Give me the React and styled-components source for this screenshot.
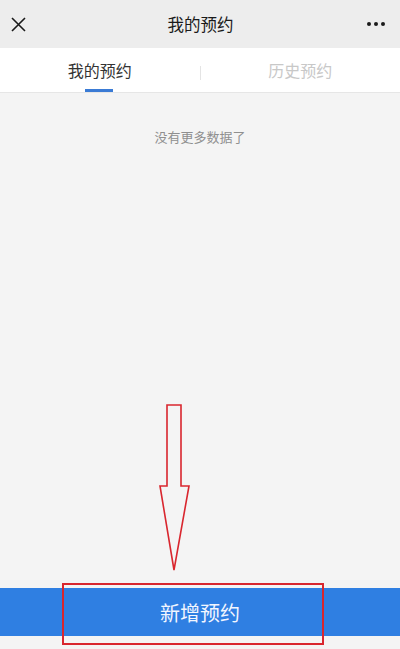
import React from 'react'
import styled, {createGlobalStyle} from 'styled-components'

const GlobalStyle = createGlobalStyle`
  html, body {
    margin: 0;
    padding: 0;
    background: #f4f4f4;
  }
  body {
    font-family: "Noto Sans CJK SC", "Liberation Sans", sans-serif;
  }
`

const Page = styled.div`
  width: 400px;
  height: 649px;
  display: flex;
  flex-direction: column;
  background: #f4f4f4;
  overflow: hidden;
`

const NavBar = styled.div`
  height: 48px;
  display: flex;
  align-items: center;
  justify-content: space-between;
  padding: 0 14px 0 11px;
  background: #ededed;
  box-sizing: border-box;
`

const NavTitle = styled.div`
  font-size: 16.5px;
  color: #1a1a1a;
  margin-left: 4px;
`

const IconBtn = styled.div`
  width: 22px;
  display: flex;
  align-items: center;
  justify-content: ${p => p.right ? 'flex-end' : 'flex-start'};
`

const Tabs = styled.div`
  height: 44px;
  display: flex;
  align-items: stretch;
  background: #fff;
  border-bottom: 1px solid #e6e6e6;
`

const Tab = styled.div`
  flex: 1;
  display: flex;
  align-items: center;
  justify-content: center;
  font-size: 16px;
  color: ${p => p.active ? '#333' : '#c8c8c8'};
  position: relative;
  &::after {
    content: '';
    display: ${p => p.active ? 'block' : 'none'};
    position: absolute;
    bottom: 0;
    left: 50%;
    width: 28px;
    height: 3px;
    margin-left: -15px;
    background: #3a7bd5;
  }
`

const Divider = styled.div`
  width: 1px;
  height: 14px;
  align-self: center;
  margin-top: 6px;
  background: #e4e4e4;
`

const Body = styled.div`
  flex: 1;
  display: flex;
  flex-direction: column;
  align-items: center;
`

const Empty = styled.div`
  margin-top: 34px;
  font-size: 13px;
  color: #8f8f8f;
`

const ArrowArea = styled.div`
  flex: 1;
  width: 100%;
  position: relative;
`

const Footer = styled.div`
  height: 66px;
  position: relative;
`

const AddButton = styled.div`
  height: 48px;
  margin-top: 5px;
  background: #2f7fe2;
  color: #f2f6ff;
  font-size: 20px;
  display: flex;
  align-items: center;
  justify-content: center;
`

const Highlight = styled.div`
  position: absolute;
  left: 62px;
  top: 0;
  width: 262px;
  height: 62px;
  border: 2px solid #d9262e;
  box-sizing: border-box;
`

const Arrow = styled.svg`
  position: absolute;
  left: 158px;
  bottom: 9px;
`

export default function App() {
  return (
    <Page>
      <GlobalStyle />
      <NavBar>
        <IconBtn>
          <svg width="15" height="15" viewBox="0 0 15 15">
            <path d="M1 1L14 14M14 1L1 14" stroke="#1a1a1a" strokeWidth="1.6" fill="none" />
          </svg>
        </IconBtn>
        <NavTitle>我的预约</NavTitle>
        <IconBtn right>
          <svg width="20" height="6" viewBox="0 0 20 6">
            <circle cx="3" cy="3" r="2" fill="#1a1a1a" />
            <circle cx="10" cy="3" r="2" fill="#1a1a1a" />
            <circle cx="17" cy="3" r="2" fill="#1a1a1a" />
          </svg>
        </IconBtn>
      </NavBar>
      <Tabs>
        <Tab active>我的预约</Tab>
        <Divider />
        <Tab>历史预约</Tab>
      </Tabs>
      <Body>
        <Empty>没有更多数据了</Empty>
        <ArrowArea>
          <Arrow width="34" height="170" viewBox="0 0 34 170">
            <path
              d="M9 1H23V82H31L16 166L2 82H9Z"
              fill="none"
              stroke="#d9262e"
              strokeWidth="1.6"
              strokeLinejoin="miter"
            />
          </Arrow>
        </ArrowArea>
      </Body>
      <Footer>
        <AddButton>新增预约</AddButton>
        <Highlight />
      </Footer>
    </Page>
  )
}
